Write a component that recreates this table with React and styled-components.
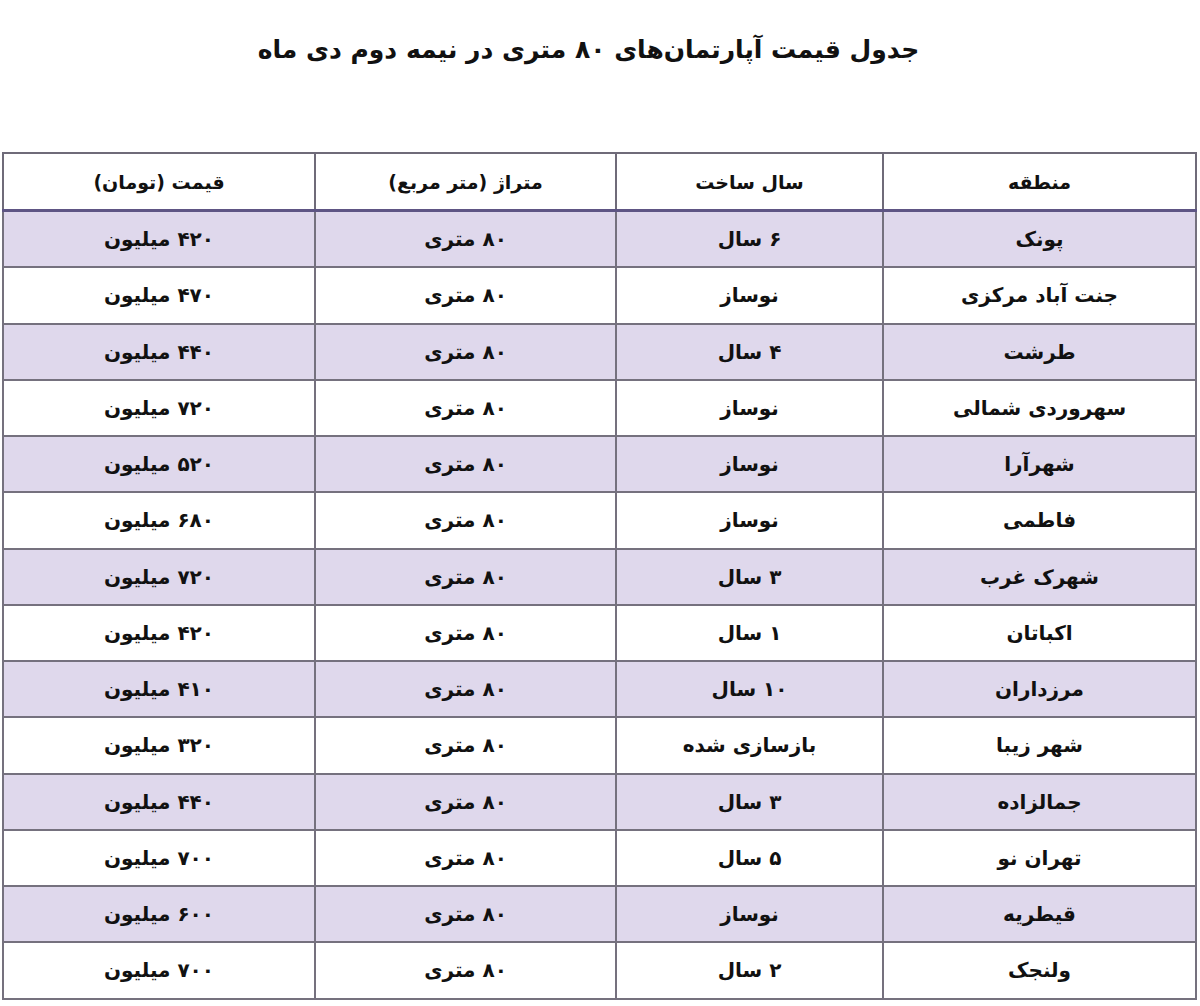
import React from "react";
import styled, { createGlobalStyle } from "styled-components";

const ROWS = [
  ["پونک", "۶ سال", "۸۰ متری", "۴۲۰ میلیون"],
  ["جنت آباد مرکزی", "نوساز", "۸۰ متری", "۴۷۰ میلیون"],
  ["طرشت", "۴ سال", "۸۰ متری", "۴۴۰ میلیون"],
  ["سهروردی شمالی", "نوساز", "۸۰ متری", "۷۲۰ میلیون"],
  ["شهرآرا", "نوساز", "۸۰ متری", "۵۲۰ میلیون"],
  ["فاطمی", "نوساز", "۸۰ متری", "۶۸۰ میلیون"],
  ["شهرک غرب", "۳ سال", "۸۰ متری", "۷۲۰ میلیون"],
  ["اکباتان", "۱ سال", "۸۰ متری", "۴۲۰ میلیون"],
  ["مرزداران", "۱۰ سال", "۸۰ متری", "۴۱۰ میلیون"],
  ["شهر زیبا", "بازسازی شده", "۸۰ متری", "۳۲۰ میلیون"],
  ["جمالزاده", "۳ سال", "۸۰ متری", "۴۴۰ میلیون"],
  ["تهران نو", "۵ سال", "۸۰ متری", "۷۰۰ میلیون"],
  ["قیطریه", "نوساز", "۸۰ متری", "۶۰۰ میلیون"],
  ["ولنجک", "۲ سال", "۸۰ متری", "۷۰۰ میلیون"],
];

const HEADERS = ["منطقه", "سال ساخت", "متراژ (متر مربع)", "قیمت (تومان)"];
const WIDTHS = [313, 267, 301, 312];

const GlobalStyle = createGlobalStyle`
  body {
    margin: 0;
    background: #ffffff;
    font-family: "DejaVu Sans", "Noto Sans", sans-serif;
    color: #111111;
  }
`;

const Page = styled.div`
  direction: rtl;
  padding: 0 3px 0 4px;
`;

const Title = styled.h1`
  margin: 0;
  padding-top: 31px;
  padding-right: 24px;
  height: 152px;
  box-sizing: border-box;
  text-align: center;
  font-size: 25px;
  font-weight: 700;
  line-height: 38px;
`;

const Table = styled.table`
  width: 1193px;
  border-collapse: collapse;
  table-layout: fixed;
`;

const HeadCell = styled.th`
  height: 55px;
  padding: 0;
  border: 2px solid #6f6b79;
  border-bottom: 3px solid #5e5584;
  background: #ffffff;
  font-size: 19px;
  font-weight: 700;
  text-align: center;
`;

const Row = styled.tr`
  background: ${(props) => (props.shaded ? "#dfd8ec" : "#ffffff")};
`;

const Cell = styled.td`
  height: 54.25px;
  padding: 0;
  border: 2px solid #75717e;
  border-top-width: 1px;
  font-size: 20px;
  font-weight: 700;
  text-align: center;
`;

const App = () => {
  return (
    <Page>
      <GlobalStyle />
      <Title>جدول قیمت آپارتمان‌های ۸۰ متری در نیمه دوم دی ماه</Title>
      <Table>
        <colgroup>
          {WIDTHS.map((w) => (
            <col key={w} style={{ width: w }} />
          ))}
        </colgroup>
        <thead>
          <tr>
            {HEADERS.map((h) => (
              <HeadCell key={h}>{h}</HeadCell>
            ))}
          </tr>
        </thead>
        <tbody>
          {ROWS.map((row, i) => (
            <Row key={row[0]} shaded={i % 2 === 0}>
              {row.map((cell, j) => (
                <Cell key={j}>{cell}</Cell>
              ))}
            </Row>
          ))}
        </tbody>
      </Table>
    </Page>
  );
};

export default App;
